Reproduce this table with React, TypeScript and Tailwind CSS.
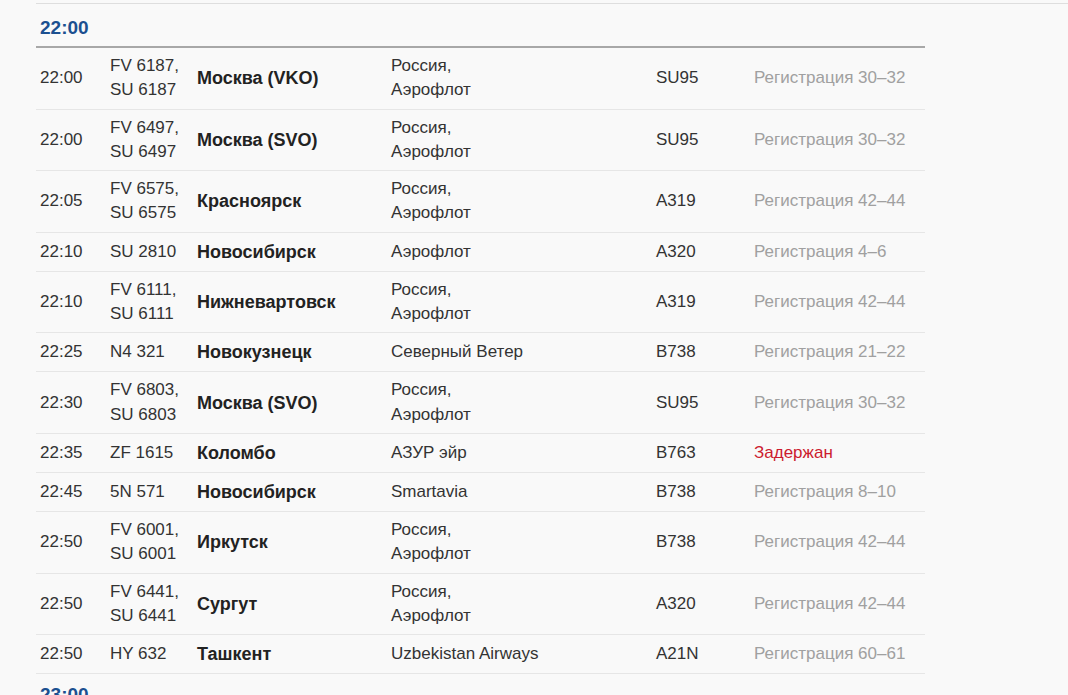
import React from 'react';

type Flight = {
  time: string;
  flight: string[];
  dest: string;
  airline: string[];
  plane: string;
  status: string;
  delayed?: boolean;
};

const flights: Flight[] = [
  { time: '22:00', flight: ['FV 6187,', 'SU 6187'], dest: 'Москва (VKO)', airline: ['Россия,', 'Аэрофлот'], plane: 'SU95', status: 'Регистрация 30–32' },
  { time: '22:00', flight: ['FV 6497,', 'SU 6497'], dest: 'Москва (SVO)', airline: ['Россия,', 'Аэрофлот'], plane: 'SU95', status: 'Регистрация 30–32' },
  { time: '22:05', flight: ['FV 6575,', 'SU 6575'], dest: 'Красноярск', airline: ['Россия,', 'Аэрофлот'], plane: 'A319', status: 'Регистрация 42–44' },
  { time: '22:10', flight: ['SU 2810'], dest: 'Новосибирск', airline: ['Аэрофлот'], plane: 'A320', status: 'Регистрация 4–6' },
  { time: '22:10', flight: ['FV 6111,', 'SU 6111'], dest: 'Нижневартовск', airline: ['Россия,', 'Аэрофлот'], plane: 'A319', status: 'Регистрация 42–44' },
  { time: '22:25', flight: ['N4 321'], dest: 'Новокузнецк', airline: ['Северный Ветер'], plane: 'B738', status: 'Регистрация 21–22' },
  { time: '22:30', flight: ['FV 6803,', 'SU 6803'], dest: 'Москва (SVO)', airline: ['Россия,', 'Аэрофлот'], plane: 'SU95', status: 'Регистрация 30–32' },
  { time: '22:35', flight: ['ZF 1615'], dest: 'Коломбо', airline: ['АЗУР эйр'], plane: 'B763', status: 'Задержан', delayed: true },
  { time: '22:45', flight: ['5N 571'], dest: 'Новосибирск', airline: ['Smartavia'], plane: 'B738', status: 'Регистрация 8–10' },
  { time: '22:50', flight: ['FV 6001,', 'SU 6001'], dest: 'Иркутск', airline: ['Россия,', 'Аэрофлот'], plane: 'B738', status: 'Регистрация 42–44' },
  { time: '22:50', flight: ['FV 6441,', 'SU 6441'], dest: 'Сургут', airline: ['Россия,', 'Аэрофлот'], plane: 'A320', status: 'Регистрация 42–44' },
  { time: '22:50', flight: ['HY 632'], dest: 'Ташкент', airline: ['Uzbekistan Airways'], plane: 'A21N', status: 'Регистрация 60–61' },
];

const cell = 'py-[6px] pl-[4px] align-middle';

export default function App() {
  return (
    <div
      className="min-h-screen overflow-hidden bg-[#f9f9f9] text-[17px] leading-[24.3px] text-[#333]"
      style={{ fontFamily: '"Liberation Sans", Arial, sans-serif' }}
    >
      <div className="ml-[36px] h-[4px] border-b border-[#dedede]" />
      <div className="w-[889px] ml-[36px]">
        <div className="border-b-2 border-[#a8a8a8] pl-[4px] pt-[13px] pb-[7px] text-[19px] leading-[22px] font-bold text-[#1c5090]">
          22:00
        </div>
        <table className="w-full border-collapse table-fixed">
          <colgroup>
            <col className="w-[70px]" />
            <col className="w-[87px]" />
            <col className="w-[194px]" />
            <col className="w-[265px]" />
            <col className="w-[98px]" />
            <col className="w-[175px]" />
          </colgroup>
          <tbody>
            {flights.map((f, i) => (
              <tr key={i} className="border-b border-[#e6e6e6]">
                <td className={cell}>{f.time}</td>
                <td className={cell}>
                  {f.flight.map((l, j) => (
                    <div key={j}>{l}</div>
                  ))}
                </td>
                <td className={`${cell} text-[18px] leading-[26px] font-bold text-[#222]`}>{f.dest}</td>
                <td className={cell}>
                  {f.airline.map((l, j) => (
                    <div key={j}>{l}</div>
                  ))}
                </td>
                <td className={cell}>{f.plane}</td>
                <td className={`${cell} ${f.delayed ? 'text-[#cc1b2e]' : 'text-[#a0a0a0]'}`}>{f.status}</td>
              </tr>
            ))}
          </tbody>
        </table>
        <div className="pl-[4px] pt-[10px] pb-[9px] text-[19px] leading-[22px] font-bold text-[#1c5090]">23:00</div>
      </div>
    </div>
  );
}
